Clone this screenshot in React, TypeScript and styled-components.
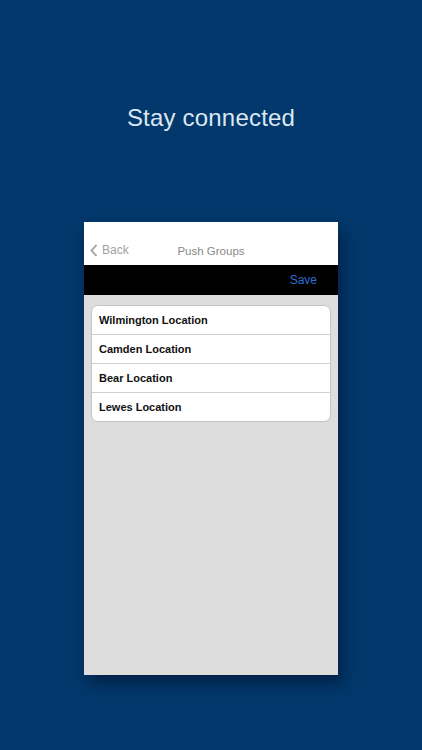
import React from 'react'
import styled, { createGlobalStyle } from 'styled-components'

const GlobalStyle = createGlobalStyle`
  html, body {
    margin: 0;
    padding: 0;
    background: #02386b;
    font-family: 'Liberation Sans', Arial, sans-serif;
  }
`

const Page = styled.div`
  width: 422px;
  height: 750px;
  background: #02386b;
  display: flex;
  flex-direction: column;
  align-items: center;
  overflow: hidden;
`

const Headline = styled.h1`
  margin: 104px 0 0;
  font-size: 24px;
  font-weight: 400;
  color: #dbe7f3;
  letter-spacing: 0.2px;
  line-height: 28px;
`

const Phone = styled.div`
  margin-top: 90px;
  width: 254px;
  height: 453px;
  display: flex;
  flex-direction: column;
  background: #dddddd;
  box-shadow: 4px 8px 14px rgba(0, 15, 40, 0.55);
`

const NavBar = styled.div`
  height: 43px;
  background: #fff;
  display: flex;
  align-items: flex-end;
  padding-bottom: 8px;
  box-sizing: border-box;
  position: relative;
`

const BackButton = styled.div`
  display: flex;
  align-items: center;
  gap: 4px;
  padding-left: 6px;
  color: #a0a0a0;
  font-size: 12px;
`

const NavTitle = styled.div`
  position: absolute;
  left: 0;
  right: 0;
  bottom: 8px;
  text-align: center;
  color: #8a8a8a;
  font-size: 11.5px;
  pointer-events: none;
`

const ToolBar = styled.div`
  height: 30px;
  background: #000;
  display: flex;
  align-items: center;
  justify-content: flex-end;
  padding-right: 21px;
`

const SaveButton = styled.span`
  color: #2a6fd0;
  font-size: 12px;
`

const Content = styled.div`
  flex: 1;
  padding: 10px 7px;
`

const List = styled.div`
  background: #fff;
  border: 1px solid #c4c4c4;
  border-radius: 7px;
  overflow: hidden;
`

const Row = styled.div<{ $last?: boolean }>`
  height: 28px;
  display: flex;
  align-items: center;
  padding-left: 7px;
  font-size: 11px;
  font-weight: 700;
  color: #111;
  border-bottom: ${p => (p.$last ? 'none' : '1px solid #cfcfcf')};
`

const groups = ['Wilmington Location', 'Camden Location', 'Bear Location', 'Lewes Location']

export default function App() {
  return (
    <>
      <GlobalStyle />
      <Page>
        <Headline>Stay connected</Headline>
        <Phone>
          <NavBar>
            <BackButton>
              <svg width="8" height="13" viewBox="0 0 8 13">
                <path d="M6.5 1 L1.5 6.5 L6.5 12" fill="none" stroke="#a0a0a0" strokeWidth="1.8" />
              </svg>
              Back
            </BackButton>
            <NavTitle>Push Groups</NavTitle>
          </NavBar>
          <ToolBar>
            <SaveButton>Save</SaveButton>
          </ToolBar>
          <Content>
            <List>
              {groups.map((g, i) => (
                <Row key={g} $last={i === groups.length - 1}>
                  {g}
                </Row>
              ))}
            </List>
          </Content>
        </Phone>
      </Page>
    </>
  )
}
